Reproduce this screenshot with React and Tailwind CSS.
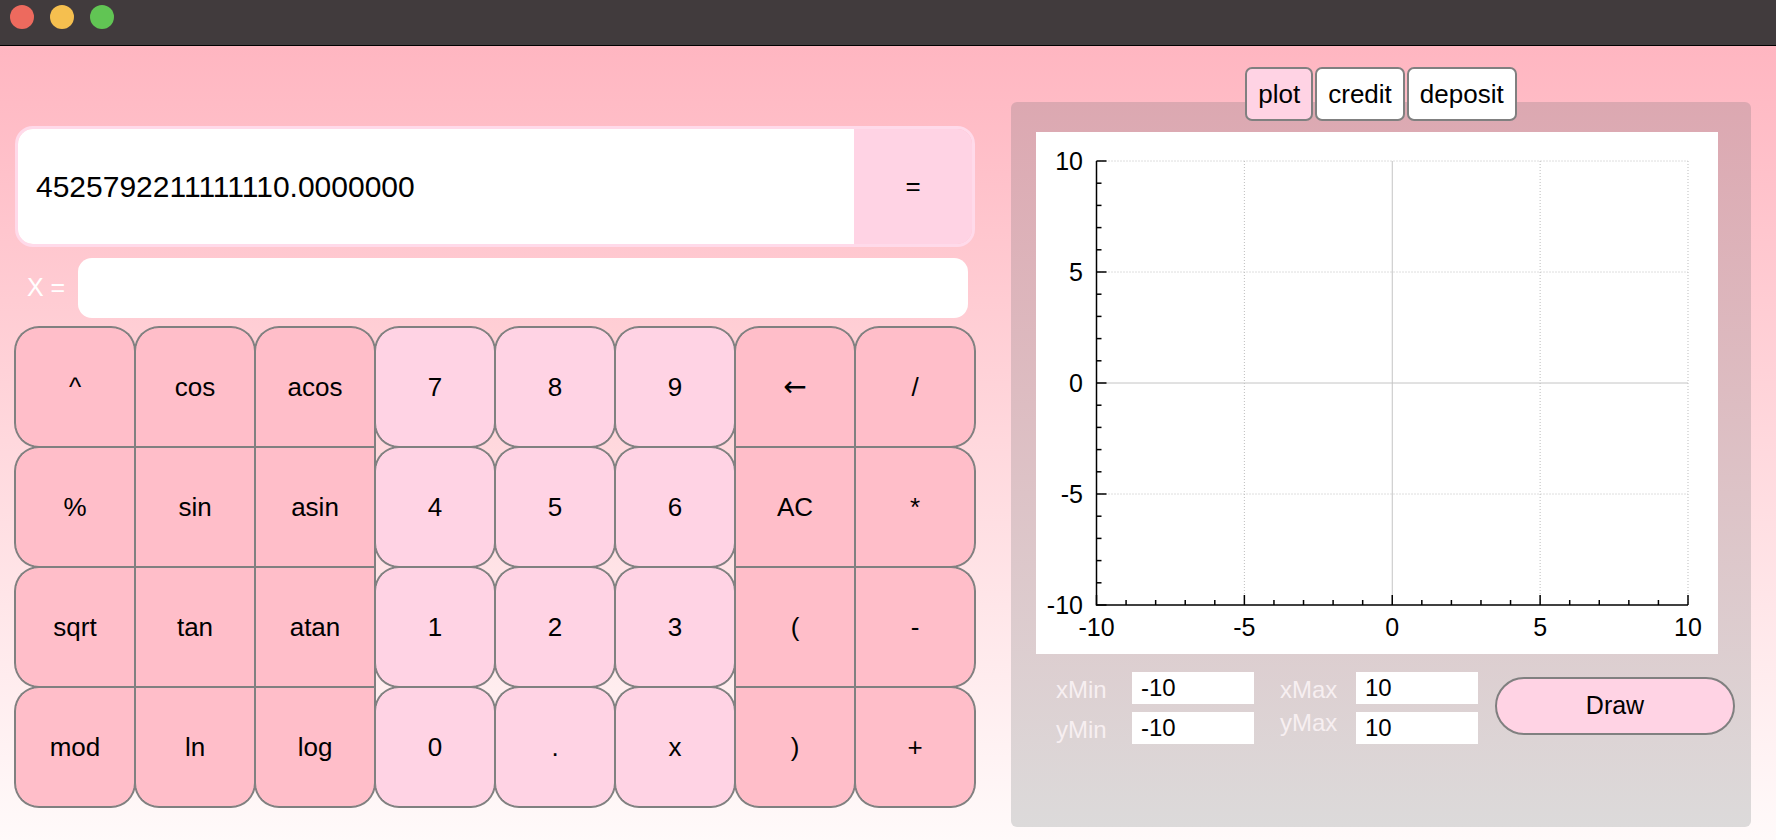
import React from "react";

const keys = [
  ["^", "cos", "acos", "7", "8", "9", "←", "/"],
  ["%", "sin", "asin", "4", "5", "6", "AC", "*"],
  ["sqrt", "tan", "atan", "1", "2", "3", "(", "-"],
  ["mod", "ln", "log", "0", ".", "x", ")", "+"],
];

function Key({ label, r, c }) {
  const digit = c >= 3 && c <= 5;
  let shape;
  if (digit) {
    shape = "rounded-[24px] bg-[#ffd3e4]";
  } else {
    const tl = r === 0 || c === 0;
    const tr = r === 0 || c === 7;
    const bl = r === 3 || c === 0;
    const br = r === 3 || c === 7;
    shape = [
      "bg-[#ffbec9]",
      tl ? "rounded-tl-[24px]" : "",
      tr ? "rounded-tr-[24px]" : "",
      bl ? "rounded-bl-[24px]" : "",
      br ? "rounded-br-[24px]" : "",
    ].join(" ");
  }
  return (
    <div
      className={`${shape} border border-[#808080] shadow-[0_0_0_1px_#808080] flex items-center justify-center text-[26px] text-black`}
    >
      {label === "←" ? (
        <span className="font-['DejaVu_Sans',sans-serif] text-[28px]">←</span>
      ) : (
        label
      )}
    </div>
  );
}

function Plot() {
  const X0 = 60.5,
    X1 = 652,
    Y0 = 29,
    Y1 = 473;
  const xs = (v) => X0 + ((v + 10) * (X1 - X0)) / 20;
  const ys = (v) => Y1 - ((v + 10) * (Y1 - Y0)) / 20;
  const ints = [];
  for (let i = -10; i <= 10; i++) ints.push(i);
  const majors = [-5, 0, 5, 10];
  return (
    <svg width="682" height="522" className="block">
      {majors.map((v) => (
        <g key={"g" + v}>
          <line
            x1={xs(v)}
            x2={xs(v)}
            y1={Y0}
            y2={Y1}
            stroke={v === 0 ? "#c4c4c4" : "#bdbdbd"}
            strokeWidth="1"
            strokeDasharray={v === 0 ? undefined : "1 2"}
          />
          <line
            x1={X0}
            x2={X1}
            y1={ys(v)}
            y2={ys(v)}
            stroke={v === 0 ? "#c4c4c4" : "#bdbdbd"}
            strokeWidth="1"
            strokeDasharray={v === 0 ? undefined : "1 2"}
          />
        </g>
      ))}
      {ints.map((v) => (
        <g key={"t" + v}>
          <line
            x1={X0}
            x2={X0 + (v % 5 === 0 ? 10 : 5)}
            y1={ys(v)}
            y2={ys(v)}
            stroke="#000"
            strokeWidth="1.5"
          />
          <line
            x1={xs(v)}
            x2={xs(v)}
            y1={Y1}
            y2={Y1 - (v % 5 === 0 ? 10 : 5)}
            stroke="#000"
            strokeWidth="1.5"
          />
        </g>
      ))}
      <line x1={X0} x2={X0} y1={Y0} y2={Y1 + 0.75} stroke="#000" strokeWidth="1.5" />
      <line x1={X0} x2={X1} y1={Y1} y2={Y1} stroke="#000" strokeWidth="1.5" />
      {[10, 5, 0, -5, -10].map((v) => (
        <text
          key={"yl" + v}
          x="47"
          y={ys(v)}
          textAnchor="end"
          dominantBaseline="central"
          fontFamily="Liberation Sans, Arial, sans-serif"
          fontSize="25"
          fill="#000"
        >
          {v}
        </text>
      ))}
      {[-10, -5, 0, 5, 10].map((v) => (
        <text
          key={"xl" + v}
          x={xs(v)}
          y="495"
          textAnchor="middle"
          dominantBaseline="central"
          fontFamily="Liberation Sans, Arial, sans-serif"
          fontSize="25"
          fill="#000"
        >
          {v}
        </text>
      ))}
    </svg>
  );
}

function Field({ label, value, raise }) {
  return (
    <>
      <div
        className={`w-[76px] text-[24px] text-[#f7eff1] ${raise ? "pb-[10px]" : "pt-[4px]"}`}
      >
        {label}
      </div>
      <div className="w-[122px] h-[32px] bg-white pl-[9px] text-[24px] flex items-center text-black">
        {value}
      </div>
    </>
  );
}

export default function App() {
  return (
    <div className="w-[1776px] h-[840px] flex flex-col overflow-hidden font-['Liberation_Sans',Arial,sans-serif] text-black">
      <div className="h-[46px] shrink-0 bg-[#413b3d] border-b border-black flex items-start pt-[5px] pl-[10px] gap-[16px]">
        <div className="w-6 h-6 rounded-full bg-[#ed6a5e]" />
        <div className="w-6 h-6 rounded-full bg-[#f5bf4f]" />
        <div className="w-6 h-6 rounded-full bg-[#61c554]" />
      </div>
      <div className="flex-1 flex bg-linear-to-b from-[#ffb6c1] to-[#fffafa] pl-[15px]">
        <div className="w-[960px] flex flex-col pt-[80px]">
          <div className="h-[121px] rounded-[18px] border-[3px] border-[#ffdaea] flex overflow-hidden">
            <div className="flex-1 bg-white flex items-center pl-[18px] text-[30px]">
              4525792211111110.0000000
            </div>
            <div className="w-[118px] bg-[#ffd3e4] flex items-center justify-center text-[26px]">
              =
            </div>
          </div>
          <div className="mt-[11px] h-[60px] flex items-center">
            <div className="w-[63px] pl-[12px] text-[25px] text-white">X =</div>
            <div className="w-[890px] h-[60px] bg-white rounded-[14px]" />
          </div>
          <div className="mt-[9px] grid grid-cols-[repeat(8,120px)] grid-rows-[repeat(4,120px)]">
            {keys.map((row, r) =>
              row.map((k, c) => <Key key={r + "-" + c} label={k} r={r} c={c} />)
            )}
          </div>
        </div>
        <div className="ml-[36px] w-[740px] flex flex-col pt-[21px]">
          <div className="flex justify-center gap-[2px] h-[54px] relative z-10">
            <div className="h-[54px] border-2 border-[#808080] rounded-[7px] px-[11px] text-[26px] flex items-center bg-[#ffd3e4]">
              plot
            </div>
            <div className="h-[54px] border-2 border-[#808080] rounded-[7px] px-[11px] text-[26px] flex items-center bg-white">
              credit
            </div>
            <div className="h-[54px] border-2 border-[#808080] rounded-[7px] px-[11px] text-[26px] flex items-center bg-white">
              deposit
            </div>
          </div>
          <div className="-mt-[19px] h-[725px] rounded-[6px] bg-linear-to-b from-[#dca8b1] to-[#dcdada] pt-[30px] pl-[25px]">
            <div className="w-[682px] h-[522px] bg-white">
              <Plot />
            </div>
            <div className="mt-[18px] flex items-start">
              <div className="ml-[20px] flex flex-col gap-[8px]">
                <div className="flex items-center h-[32px]">
                  <Field label="xMin" value="-10" />
                  <div className="w-[26px]" />
                  <Field label="xMax" value="10" />
                </div>
                <div className="flex items-center h-[32px]">
                  <Field label="yMin" value="-10" />
                  <div className="w-[26px]" />
                  <Field label="yMax" value="10" raise />
                </div>
              </div>
              <div className="ml-[17px] mt-[5px] w-[240px] h-[58px] rounded-full border-2 border-[#808080] bg-[#ffd3e4] flex items-center justify-center text-[25px]">
                Draw
              </div>
            </div>
          </div>
        </div>
      </div>
    </div>
  );
}
